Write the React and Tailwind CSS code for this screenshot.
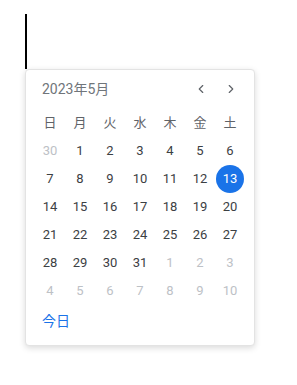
import { ChevronLeft, ChevronRight } from 'lucide-react';

const weekdays = ['日', '月', '火', '水', '木', '金', '土'];

// 6 rows, May 2023 starting on Monday
const days = [
    [30, 1, 2, 3, 4, 5, 6],
    [7, 8, 9, 10, 11, 12, 13],
    [14, 15, 16, 17, 18, 19, 20],
    [21, 22, 23, 24, 25, 26, 27],
    [28, 29, 30, 31, 1, 2, 3],
    [4, 5, 6, 7, 8, 9, 10],
];

export default function App() {
    return (
        <div className="min-h-screen bg-white pl-[25px] pt-[14px]" style={{ fontFamily: 'Roboto, "Noto Sans CJK JP", sans-serif' }}>
            {/* text cursor */}
            <div className="w-[2px] h-[55px] bg-black" />

            <div className="w-[230px] rounded-[4px] bg-white border border-[#e3e3e3] shadow-[0_2px_6px_rgba(0,0,0,0.15)] px-[9px] pb-[8px]">
                <div className="h-[38px] flex items-center justify-between pl-[7px]">
                    <span className="text-[14px] text-[#70757a]">2023年5月</span>
                    <div className="flex items-center mr-[-1px]">
                        <button className="w-[30px] h-[28px] flex items-center justify-center text-[#5f6368]">
                            <ChevronLeft className="w-[14px] h-[14px]" strokeWidth={2} />
                        </button>
                        <button className="w-[30px] h-[28px] flex items-center justify-center text-[#5f6368]">
                            <ChevronRight className="w-[14px] h-[14px]" strokeWidth={2} />
                        </button>
                    </div>
                </div>

                <div className="grid grid-cols-7 h-[29px] items-center">
                    {weekdays.map(w => (
                        <span key={w} className="text-center text-[13px] text-[#5f6368]">{w}</span>
                    ))}
                </div>

                {days.map((row, r) => (
                    <div key={r} className="grid grid-cols-7 h-[28px]">
                        {row.map((d, c) => {
                            const outside = (r === 0 && d > 7) || (r >= 4 && d < 15);
                            const selected = r === 1 && d === 13;
                            return (
                                <div key={c} className="flex items-center justify-center">
                                    {selected ? (
                                        <span className="w-[28px] h-[28px] rounded-full bg-[#1a73e8] text-white text-[13px] flex items-center justify-center">{d}</span>
                                    ) : (
                                        <span className={outside ? 'text-[13px] text-[#bdc1c6]' : 'text-[13px] text-[#3c4043]'}>{d}</span>
                                    )}
                                </div>
                            );
                        })}
                    </div>
                ))}

                <div className="h-[32px] flex items-center pl-[7px]">
                    <span className="text-[14px] text-[#1a73e8]">今日</span>
                </div>
            </div>
        </div>
    );
}
